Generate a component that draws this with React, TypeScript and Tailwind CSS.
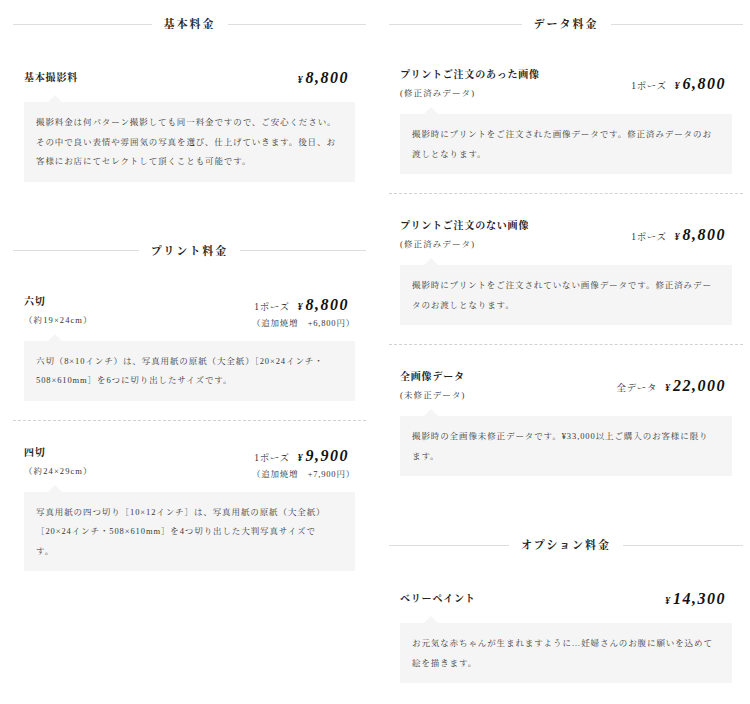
import React from "react";

type Item = {
  title: string;
  sub?: string;
  per?: string;
  price: string;
  add?: string;
  lines: string[];
};

type Section = { heading: string; items: Item[] };

const left: Section[] = [
  {
    heading: "基本料金",
    items: [
      {
        title: "基本撮影料",
        price: "8,800",
        lines: [
          "撮影料金は何パターン撮影しても同一料金ですので、ご安心ください。",
          "その中で良い表情や雰囲気の写真を選び、仕上げていきます。後日、お",
          "客様にお店にてセレクトして頂くことも可能です。",
        ],
      },
    ],
  },
  {
    heading: "プリント料金",
    items: [
      {
        title: "六切",
        sub: "（約19×24cm）",
        per: "1ポーズ",
        price: "8,800",
        add: "（追加焼増　+6,800円）",
        lines: [
          "六切（8×10インチ）は、写真用紙の原紙（大全紙）［20×24インチ・",
          "508×610mm］を6つに切り出したサイズです。",
        ],
      },
      {
        title: "四切",
        sub: "（約24×29cm）",
        per: "1ポーズ",
        price: "9,900",
        add: "（追加焼増　+7,900円）",
        lines: [
          "写真用紙の四つ切り［10×12インチ］は、写真用紙の原紙（大全紙）",
          "［20×24インチ・508×610mm］を4つ切り出した大判写真サイズで",
          "す。",
        ],
      },
    ],
  },
];

const right: Section[] = [
  {
    heading: "データ料金",
    items: [
      {
        title: "プリントご注文のあった画像",
        sub: "(修正済みデータ)",
        per: "1ポーズ",
        price: "6,800",
        lines: [
          "撮影時にプリントをご注文された画像データです。修正済みデータのお",
          "渡しとなります。",
        ],
      },
      {
        title: "プリントご注文のない画像",
        sub: "(修正済みデータ)",
        per: "1ポーズ",
        price: "8,800",
        lines: [
          "撮影時にプリントをご注文されていない画像データです。修正済みデー",
          "タのお渡しとなります。",
        ],
      },
      {
        title: "全画像データ",
        sub: "(未修正データ)",
        per: "全データ",
        price: "22,000",
        lines: [
          "撮影時の全画像未修正データです。¥33,000以上ご購入のお客様に限り",
          "ます。",
        ],
      },
    ],
  },
  {
    heading: "オプション料金",
    items: [
      {
        title: "ベリーペイント",
        price: "14,300",
        lines: [
          "お元気な赤ちゃんが生まれますように…妊婦さんのお腹に願いを込めて",
          "絵を描きます。",
        ],
      },
    ],
  },
];

function Heading({ text }: { text: string }) {
  return (
    <div className="flex items-center h-[20px] mb-[9px] gap-[12px]">
      <div className="flex-1 h-px bg-[#dedede]" />
      <h2 className="text-[11px] leading-[20px] tracking-[2px] font-bold text-[#222]">
        {text}
      </h2>
      <div className="flex-1 h-px bg-[#dedede]" />
    </div>
  );
}

function PriceItem({ item, first }: { item: Item; first: boolean }) {
  return (
    <div
      className={
        "pt-[21px] pb-[19px] px-[11px] " +
        (first ? "" : "border-t border-dashed border-[#d2d2d2]")
      }
    >
      <div className="flex justify-between items-center pt-[2px]">
        <div>
          <p className="text-[10px] leading-[18px] tracking-[0.8px] font-bold text-[#222]">
            {item.title}
          </p>
          {item.sub && (
            <p className="text-[8.5px] leading-[18px] tracking-[1.1px] text-[#333]">
              {item.sub}
            </p>
          )}
        </div>
        <div className="text-right">
          <div className="flex items-baseline justify-end h-[24px] pr-[6px]">
            {item.per && (
              <span className="text-[9.5px] leading-[24px] tracking-[0.6px] text-[#333] mr-[8px]">
                {item.per}
              </span>
            )}
            <span className="text-[10px] leading-[24px] font-bold italic text-[#111] mr-[3px]">
              ¥
            </span>
            <span className="text-[16px] leading-[24px] font-bold italic tracking-[1.5px] text-[#111]">
              {item.price}
            </span>
          </div>
          {item.add && (
            <p className="text-[8.5px] leading-[12px] tracking-[0.8px] text-[#333]">
              {item.add}
            </p>
          )}
        </div>
      </div>
      <div className="relative mt-[12px] bg-[#f5f5f5] pt-[11px] pb-[10px] pl-[12px] pr-[6px]">
        <span className="absolute left-[24px] top-[-7px] w-0 h-0 border-l-[7px] border-r-[7px] border-b-[7px] border-l-transparent border-r-transparent border-b-[#f5f5f5]" />
        <p className="text-[8.5px] leading-[19.5px] tracking-[0.9px] text-[#383838] whitespace-nowrap">
          {item.lines.map((l, i) => (
            <React.Fragment key={i}>
              {l}
              {i < item.lines.length - 1 && <br />}
            </React.Fragment>
          ))}
        </p>
      </div>
    </div>
  );
}

function Column({ sections, width }: { sections: Section[]; width: string }) {
  return (
    <div className={width}>
      {sections.map((s, i) => (
        <section key={i} className={i < sections.length - 1 ? "mb-[40px]" : ""}>
          <Heading text={s.heading} />
          {s.items.map((it, j) => (
            <PriceItem key={j} item={it} first={j === 0} />
          ))}
        </section>
      ))}
    </div>
  );
}

export default function App() {
  return (
    <div className="w-[750px] min-h-[704px] bg-white pt-[14px] pl-[13px] flex gap-[23px] font-['Liberation_Serif','Noto_Serif_CJK_JP','Noto_Sans_CJK_JP',serif]">
      <Column sections={left} width="w-[353px]" />
      <Column sections={right} width="w-[354px]" />
    </div>
  );
}
